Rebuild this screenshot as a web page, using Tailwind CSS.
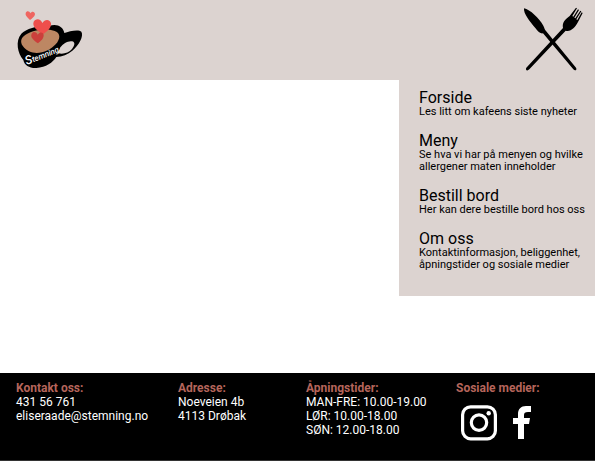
<!DOCTYPE html>
<html lang="no">
<head>
<meta charset="utf-8">
<meta name="viewport" content="width=device-width, initial-scale=1">
<title>Stemning</title>
<script src="https://cdn.jsdelivr.net/npm/@tailwindcss/browser@4"></script>
</head>
<body class="flex min-h-screen flex-col bg-white font-[Roboto,sans-serif] text-black">
<header class="flex h-20 items-start justify-between bg-[#dcd3d0] pt-[5px] pr-2 pl-[10px]">
  <a href="#" aria-label="Stemning">
    <svg class="h-[70px] w-20" viewBox="0 0 240 210" role="img" aria-label="Stemning">
      <path fill-rule="evenodd" d="M34 86C50 69 88 61 118 63C140 55 160 65 163 84C177 78 207 72 214 80C222 93 207 120 187 137C174 148 156 155 139 156C129 172 108 187 79 189C59 190 43 181 40 165C23 145 15 108 34 86ZM144 143C154 150 176 144 186 132C195 121 196 111 186 109C174 107 159 116 151 127Z"/>
      <path fill="#bd8763" d="M41 94C60 77 103 68 132 77C154 84 151 102 137 118C118 139 84 151 57 139C36 128 25 108 41 94Z"/>
      <path fill="#ef6560" d="M60 45C51 37 45 31 47 24C50 16 59 18 61 25C66 17 75 20 75 28C74 35 67 40 60 45Z"/>
      <path fill="#ee4f4c" d="M99 88C79 76 66 63 71 50C76 39 93 40 97 54C105 40 121 43 123 55C125 68 113 78 99 88Z"/>
      <path fill="#cb3f3b" d="M84 115C70 105 60 96 65 86C69 78 80 80 83 89C90 79 101 82 101 91C101 101 93 108 84 115Z"/>
      <text x="50" y="180" transform="rotate(-22 50 180)" fill="#fff" font-size="24" font-style="italic" font-weight="500" font-family="Liberation Sans Narrow, Roboto, sans-serif"><tspan font-size="36">S</tspan>temning</text>
    </svg>
  </a>
  <svg class="h-[72px] w-16" viewBox="-1 3 192 216" role="img" aria-label="Kniv og gaffel">
    <path d="M2 13C20 16 48 44 60 65C64 73 64 77 68 81L158 191C162 198 155 202 150 196L59 88C52 90 44 83 36 72C19 52 0 29 2 13Z"/>
    <path d="M9 191L119 72C116 54 126 46 139 36L158 11L161 13L147 36L150 38L164 16L167 18L153 41L156 43L171 20L174 22L159 46L162 48L175 25L178 27L164 54C155 70 143 84 127 80L18 196C11 203 5 197 9 191Z"/>
  </svg>
</header>
<main class="flex flex-1 justify-end">
  <nav class="flex w-[196px] flex-col gap-[15px] self-start bg-[#dcd3d0] pt-[10px] pr-2 pb-[25px] pl-5 text-[11px] leading-[12px]">
    <a href="#"><span class="block text-[16px] leading-[16px]">Forside</span>Les litt om kafeens siste nyheter</a>
    <a href="#"><span class="block text-[16px] leading-[16px]">Meny</span>Se hva vi har på menyen og hvilke allergener maten inneholder</a>
    <a href="#"><span class="block text-[16px] leading-[16px]">Bestill bord</span>Her kan dere bestille bord hos oss</a>
    <a href="#"><span class="block text-[16px] leading-[16px]">Om oss</span>Kontaktinformasjon, beliggenhet, åpningstider og sosiale medier</a>
  </nav>
</main>
<footer class="grid grid-cols-[162fr_128fr_150fr_123fr] border-b border-[#333] bg-black pt-2 pr-4 pb-[19px] pl-4 text-[12px] leading-[14px] text-white">
  <section>
    <h2 class="font-bold text-[#b5655b]">Kontakt oss:</h2>
    <p>431 56 761</p>
    <a href="mailto:eliseraade@stemning.no">eliseraade@stemning.no</a>
  </section>
  <section>
    <h2 class="font-bold text-[#b5655b]">Adresse:</h2>
    <p>Noeveien 4b</p>
    <p>4113 Drøbak</p>
  </section>
  <section>
    <h2 class="font-bold text-[#b5655b]">Åpningstider:</h2>
    <p>MAN-FRE: 10.00-19.00</p>
    <p>LØR: 10.00-18.00</p>
    <p>SØN: 12.00-18.00</p>
  </section>
  <section>
    <h2 class="font-bold text-[#b5655b]">Sosiale medier:</h2>
    <div class="flex gap-4 pt-[10px] pl-[5px]">
      <a href="#" aria-label="Instagram">
        <svg class="h-9 w-9" viewBox="0 0 36 36" fill="none" stroke="#fff"><rect x="1.6" y="1.8" width="32.8" height="32" rx="8" stroke-width="3.2"/><circle cx="18" cy="17.6" r="7.7" stroke-width="3.2"/><circle cx="27.7" cy="8.2" r="2.2" fill="#fff" stroke="none"/></svg>
      </a>
      <a href="#" aria-label="Facebook">
        <svg class="h-9 w-5" viewBox="0 0 20 36" fill="#fff"><path d="M5 34V19H0V13H5V9C5 4 8 1 13 1H18V7H15C12 7 11 8 11 10V13H17L16 19H11V34Z"/></svg>
      </a>
    </div>
  </section>
</footer>
</body>
</html>
